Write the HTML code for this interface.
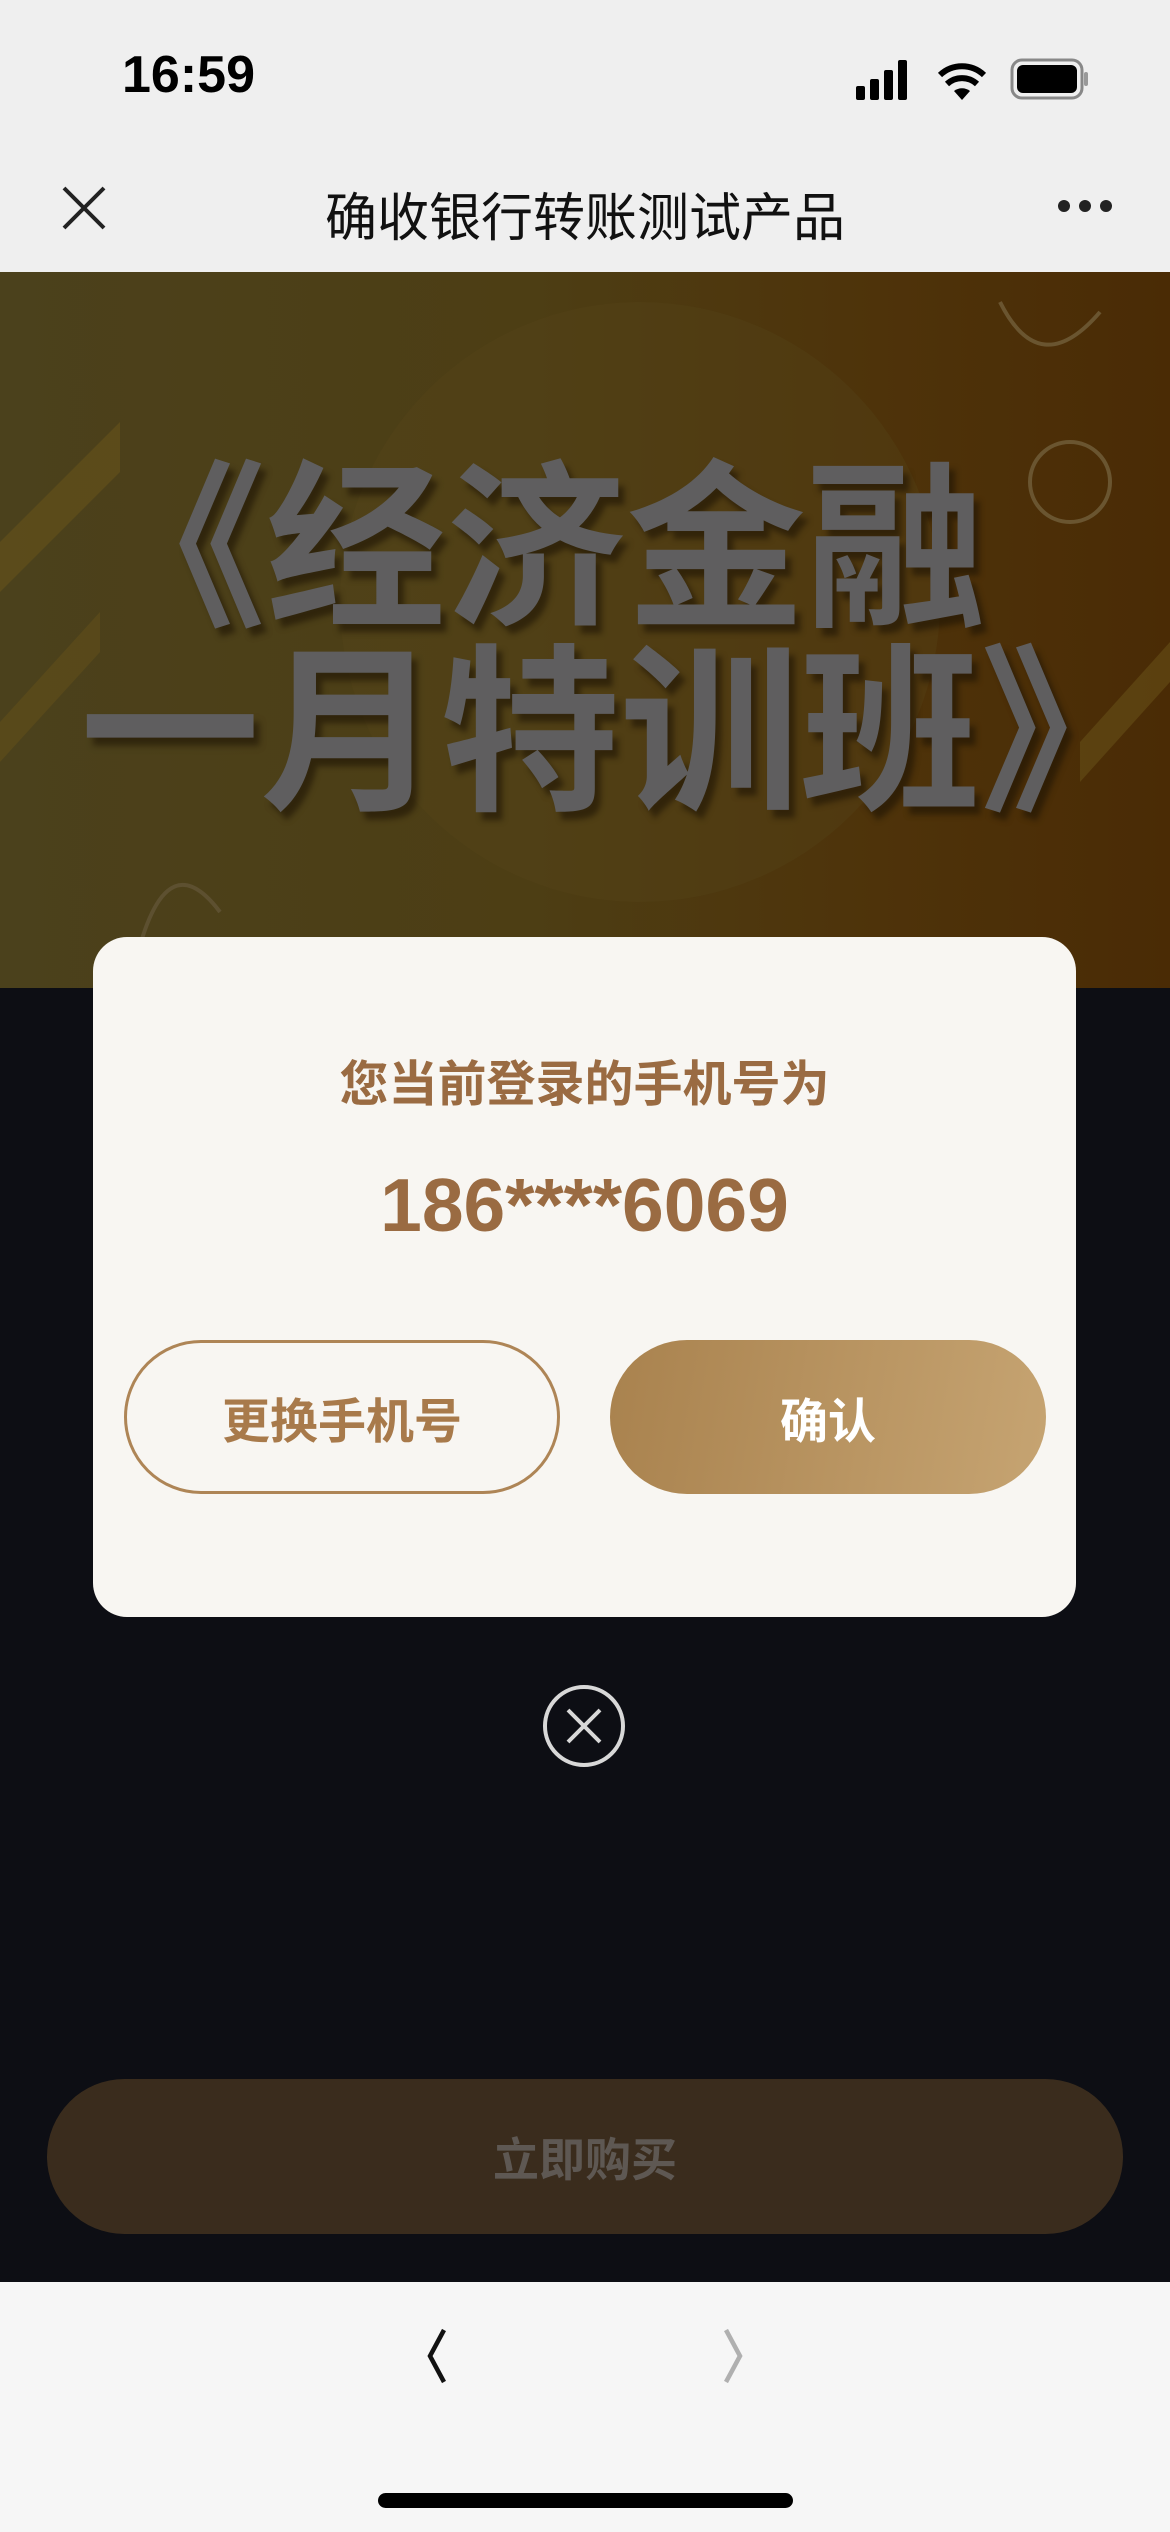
<!DOCTYPE html>
<html><head><meta charset="utf-8"><style>
*{margin:0;padding:0;box-sizing:border-box}
body{width:1170px;height:2532px;position:relative;overflow:hidden;background:#0d0e14;font-family:"Liberation Sans","Noto Sans CJK SC",sans-serif}
.abs{position:absolute}
.status{left:0;top:0;width:1170px;height:272px;background:#efefef}
.banner{left:0;top:272px;width:1170px;height:716px;background:linear-gradient(90deg,#4b411c 0%,#4d3e14 45%,#4e330a 75%,#4a2b05 100%);overflow:hidden}
.bt{color:#5f5e5f;font-weight:bold;font-size:180px;line-height:1;text-shadow:6px 8px 6px rgba(30,20,5,.6);white-space:nowrap;letter-spacing:0px;font-family:"Noto Sans CJK SC",sans-serif}
.modal{left:93px;top:937px;width:983px;height:680px;background:#f8f6f2;border-radius:34px}
.btn{top:1340px;height:154px;border-radius:77px;font-size:48px;font-weight:bold;display:flex;align-items:center;justify-content:center}
.bottom{left:0;top:2282px;width:1170px;height:250px;background:#f6f6f6}
</style></head><body>
<div class="abs status"></div>
<div class="abs" style="left:122px;top:45px;font-size:52px;font-weight:bold;color:#000">16:59</div>
<svg class="abs" style="left:850px;top:56px" width="240" height="46" viewBox="0 0 240 46">
<rect x="6" y="30" width="9" height="14" rx="2" fill="#000"/><rect x="20" y="23" width="9" height="21" rx="2" fill="#000"/><rect x="34" y="14" width="9" height="30" rx="2" fill="#000"/><rect x="48" y="4" width="9" height="40" rx="2" fill="#000"/>
<path d="M112 44 L104 35 A13 13 0 0 1 120 35 Z" fill="#000"/>
<path d="M97 28 A22 22 0 0 1 127 28" stroke="#000" stroke-width="6" fill="none"/>
<path d="M90 19 A32 32 0 0 1 134 19" stroke="#000" stroke-width="6" fill="none"/>
<rect x="162" y="4" width="70" height="38" rx="10" fill="none" stroke="#888" stroke-width="3"/>
<rect x="167" y="9" width="60" height="28" rx="6" fill="#000"/>
<rect x="234" y="16" width="4" height="14" rx="2" fill="#999"/>
</svg>
<svg class="abs" style="left:60px;top:184px" width="48" height="48" viewBox="0 0 48 48"><path d="M4 4L44 44M44 4L4 44" stroke="#222" stroke-width="4"/></svg>
<div class="abs" style="left:0;width:1170px;top:176px;text-align:center;font-size:52px;color:#111">确收银行转账测试产品</div>
<svg class="abs" style="left:1056px;top:198px" width="60" height="16"><circle cx="8" cy="8" r="6" fill="#222"/><circle cx="29" cy="8" r="6" fill="#222"/><circle cx="50" cy="8" r="6" fill="#222"/></svg>
<div class="abs banner">
<svg class="abs" style="left:0;top:0" width="1170" height="716">
<circle cx="640" cy="330" r="300" fill="#57451a" opacity=".35"/>
<path d="M0 270 L120 150 L120 200 L0 320Z" fill="#6b5519" opacity=".5"/>
<path d="M0 450 L100 340 L100 380 L0 490Z" fill="#6b5519" opacity=".4"/>
<path d="M1080 470 L1170 370 L1170 410 L1080 510Z" fill="#6b5519" opacity=".5"/>
<circle cx="1070" cy="210" r="40" fill="none" stroke="#6a5530" stroke-width="4"/>
<path d="M1000 30 Q1040 110 1100 40" fill="none" stroke="#6a5530" stroke-width="4"/>
<path d="M130 716 Q160 560 220 640" fill="none" stroke="#5d5030" stroke-width="4"/>
</svg>
<div class="abs bt" style="left:86px;top:172px">《经济金融</div>
<div class="abs bt" style="left:80px;top:356px">一月特训班》</div>
</div>
<div class="abs modal"></div>
<div class="abs" style="left:93px;width:983px;top:1045px;text-align:center;font-size:49px;font-weight:bold;color:#9a6b42">您当前登录的手机号为</div>
<div class="abs" style="left:93px;width:983px;top:1162px;text-align:center;font-size:75px;font-weight:bold;color:#9a6b42">186****6069</div>
<div class="abs btn" style="left:124px;width:436px;border:3px solid #ae8556;color:#a87a4b">更换手机号</div>
<div class="abs btn" style="left:610px;width:436px;background:linear-gradient(100deg,#a9824e,#c6a472);color:#fff">确认</div>
<svg class="abs" style="left:542px;top:1684px" width="84" height="84"><circle cx="42" cy="42" r="39" fill="none" stroke="#d8d8d8" stroke-width="4"/><path d="M26 26L58 58M58 26L26 58" stroke="#d8d8d8" stroke-width="4"/></svg>
<div class="abs" style="left:47px;top:2079px;width:1076px;height:155px;border-radius:78px;background:#3a2c1d;display:flex;align-items:center;justify-content:center;font-size:46px;font-weight:bold;color:#5e5853">立即购买</div>
<div class="abs bottom"></div>
<svg class="abs" style="left:410px;top:2326px" width="350" height="60"><path d="M34 4L20 30L34 56" stroke="#111" stroke-width="4.5" fill="none"/><path d="M316 4L330 30L316 56" stroke="#b0b0b0" stroke-width="4.5" fill="none"/></svg>
<div class="abs" style="left:378px;top:2493px;width:415px;height:15px;border-radius:8px;background:#000"></div>
</body></html>
